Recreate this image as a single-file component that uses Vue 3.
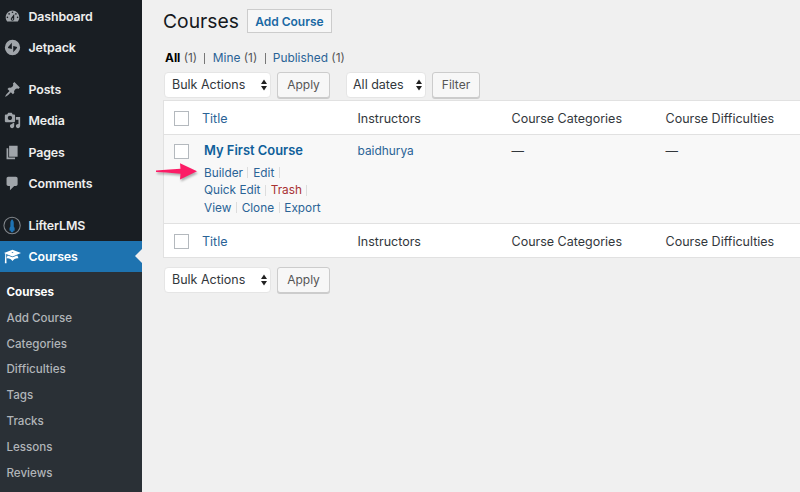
<template>
  <div class="admin">
    <!-- Sidebar -->
    <nav class="sidebar">
      <ul class="menu">
        <li
          v-for="item in menuItems"
          :key="item.label"
          class="menu-item"
          :class="{ spaced: item.spaced, current: item.current }"
        >
          <svg class="menu-icon" viewBox="0 0 20 20" aria-hidden="true">
            <template v-if="item.rocket">
              <circle cx="9.5" cy="10" r="9.6" fill="none" stroke="#82878c" stroke-width="1.2" />
              <path fill="#1e73b4" d="M9.5 2.6c1.3 1.3 2 2.6 2 4.2v4.4l1 1.6v3.4h-1.5V18h-3v-1.8H6.5v-3.4l1-1.6V6.800c0-1.600.7-2.900 2-4.200z" />
            </template>
            <path v-else fill="currentColor" fill-rule="evenodd" :d="item.icon" />
          </svg>
          <span>{{ item.label }}</span>
        </li>
      </ul>
      <ul class="submenu">
        <li v-for="(label, i) in submenu" :key="label" :class="{ active: i === 0 }">{{ label }}</li>
      </ul>
    </nav>

    <!-- Content -->
    <main class="content">
      <header class="heading">
        <h1>Courses</h1>
        <a class="add-btn">Add Course</a>
      </header>

      <div class="views">
        <b>All</b> (1)<i></i><a>Mine</a> (1)<i></i><a>Published</a> (1)
      </div>

      <div class="tablenav">
        <div class="select">
          Bulk Actions
          <svg width="6" height="12" viewBox="0 0 6 12"><path d="M3 .5 6 5H0zM3 11.5 0 7h6z" /></svg>
        </div>
        <button class="btn">Apply</button>
        <div class="select dates">
          All dates
          <svg width="6" height="12" viewBox="0 0 6 12"><path d="M3 .5 6 5H0zM3 11.5 0 7h6z" /></svg>
        </div>
        <button class="btn filter">Filter</button>
      </div>

      <div class="table">
        <div class="row head">
          <span class="check"></span>
          <a>Title</a>
          <span v-for="col in columns" :key="col">{{ col }}</span>
        </div>
        <div class="row course">
          <span class="check"></span>
          <div class="course-title">
            <strong>My First Course</strong>
            <div v-for="(line, i) in actions" :key="i" class="actions">
              <template v-for="action in line" :key="action">
                <a :class="{ trash: action === 'Trash' }">{{ action }}</a>
                <i v-if="action !== 'Export'"></i>
              </template>
            </div>
            <svg class="arrow" width="42" height="20" viewBox="0 0 42 20">
              <path fill="#fc1c66" d="M0 8.6 10 7.8 24.5 6.800 24 1.200 41 9.300 24 17.500 24.500 11.800 10 10.600 0 9.900z" />
            </svg>
          </div>
          <a class="author">baidhurya</a>
          <span>—</span>
          <span>—</span>
        </div>
        <div class="row foot">
          <span class="check"></span>
          <a>Title</a>
          <span v-for="col in columns" :key="col">{{ col }}</span>
        </div>
      </div>

      <div class="tablenav bottom">
        <div class="select">
          Bulk Actions
          <svg width="6" height="12" viewBox="0 0 6 12"><path d="M3 .5 6 5H0zM3 11.5 0 7h6z" /></svg>
        </div>
        <button class="btn">Apply</button>
      </div>
    </main>
  </div>
</template>

<script setup>
const menuItems = [
  {
    label: 'Dashboard',
    icon: 'M3.76 16h12.48c1.1-1.37 1.76-3.11 1.76-5 0-4.42-3.58-8-8-8s-8 3.58-8 8c0 1.89.66 3.63 1.76 5zM10 4c.55 0 1 .45 1 1s-.45 1-1 1-1-.45-1-1 .45-1 1-1zM6 6c.55 0 1 .45 1 1s-.45 1-1 1-1-.45-1-1 .45-1 1-1zm8 0c.55 0 1 .45 1 1s-.45 1-1 1-1-.45-1-1 .45-1 1-1zm-5.37 5.55L12 7v6c0 1.1-.9 2-2 2s-2-.9-2-2c0-.57.24-1.08.63-1.45zM4 10c.55 0 1 .45 1 1s-.45 1-1 1-1-.45-1-1 .45-1 1-1zm12 0c.55 0 1 .45 1 1s-.45 1-1 1-1-.45-1-1 .45-1 1-1zm-5 3c0-.55-.45-1-1-1s-1 .45-1 1 .45 1 1 1 1-.45 1-1z'
  },
  {
    label: 'Jetpack',
    icon: 'M10 1a9 9 0 1 0 0 18 9 9 0 0 0 0-18zM9.2 4.5v7.3l-3.6-.9c-1-.25-1.1-.9-.7-1.6zM10.9 15.5V8.2l3.6.9c1 .25 1.1.9.7 1.6z'
  },
  {
    label: 'Posts',
    spaced: true,
    icon: 'M10.44 3.02l1.82-1.82 6.36 6.35-1.83 1.82c-1.05-.68-2.48-.57-3.41.36l-.75.75c-.92.93-1.04 2.35-.35 3.41l-1.83 1.82-2.41-2.41-2.8 2.79c-.42.42-3.38 2.71-3.8 2.29s1.86-3.39 2.28-3.81l2.79-2.79L4.1 9.36l1.83-1.82c1.05.69 2.48.57 3.4-.36l.75-.75c.93-.92 1.05-2.35.36-3.41z'
  },
  {
    label: 'Media',
    icon: 'M13 11V4c0-.55-.45-1-1-1h-1.67L9 1H5L3.67 3H2c-.55 0-1 .45-1 1v7c0 .55.45 1 1 1h10c.55 0 1-.45 1-1zM7 4.5c1.38 0 2.5 1.12 2.5 2.5S8.38 9.5 7 9.5 4.5 8.38 4.5 7 5.62 4.5 7 4.5zM14 6h5v10.5c0 1.38-1.12 2.5-2.5 2.5S14 17.88 14 16.5s1.12-2.5 2.5-2.5c.17 0 .34.02.5.05V9h-3V6zm-4 8.05V13h2v3.5c0 1.38-1.12 2.5-2.5 2.5S7 17.88 7 16.5 8.12 14 9.5 14c.17 0 .34.02.5.05z'
  },
  {
    label: 'Pages',
    icon: 'M6 15V2h10v13H6zm-1 1h8v2H3V5h2v11z'
  },
  {
    label: 'Comments',
    icon: 'M5 2h9c1.1 0 2 .9 2 2v7c0 1.1-.9 2-2 2h-2l-5 5v-5H5c-1.1 0-2-.9-2-2V4c0-1.1.9-2 2-2z'
  },
  { label: 'LifterLMS', spaced: true, rocket: true },
  {
    label: 'Courses',
    current: true,
    icon: 'M10 10L2.54 7.02 3 18H1l.48-11.41L0 6l10-4 10 4zm0-5c-.55 0-1 .22-1 .5s.45.5 1 .5 1-.22 1-.5-.45-.5-1-.5zm0 6l5.57-2.23c.71.94 1.2 2.07 1.36 3.3-.3-.04-.61-.07-.93-.07-2.55 0-4.78 1.37-6 3.41C8.78 13.37 6.55 12 4 12c-.32 0-.63.03-.93.07.16-1.23.65-2.36 1.36-3.3z'
  }
]

const submenu = ['Courses', 'Add Course', 'Categories', 'Difficulties', 'Tags', 'Tracks', 'Lessons', 'Reviews']

const columns = ['Instructors', 'Course Categories', 'Course Difficulties']

const actions = [
  ['Builder', 'Edit'],
  ['Quick Edit', 'Trash'],
  ['View', 'Clone', 'Export']
]
</script>

<style>
body {
  margin: 0;
  overflow: hidden;
}
</style>

<style scoped>
.admin {
  display: flex;
  width: 800px;
  height: 492px;
  overflow: hidden;
  background: #f0f0f0;
  font-family: Inter, "Liberation Sans", sans-serif;
  font-size: 12.5px;
  color: #32373c;
}

ul {
  list-style: none;
  margin: 0;
  padding: 0;
}

a { color: #2a6396; }
i { font-style: normal; }

/* ── Sidebar ───────────────────────────────── */
.sidebar {
  box-sizing: border-box;
  display: flex;
  flex-direction: column;
  width: 142px;
  flex-shrink: 0;
  background: #191e23;
}

.menu { padding-top: 1px; }

.menu-item {
  position: relative;
  display: flex;
  align-items: center;
  gap: 8px;
  height: 31.3px;
  padding-left: 3.5px;
  color: #eee;
  font-weight: 600;
  font-size: 12.4px;
  letter-spacing: -0.13px;
}
.menu-item.spaced { margin-top: 10.3px; }

.menu-icon {
  width: 17px;
  height: 17px;
  color: #a0a5aa;
  overflow: visible;
}

.menu-item.current {
  background: #1e73b0;
  color: #fff;
}
.menu-item.current .menu-icon { color: #fff; }
.menu-item.current::after {
  content: '';
  position: absolute;
  right: 0;
  top: 8.5px;
  border: 7px solid transparent;
  border-left-width: 0;
  border-right-color: #f0f0f0;
}

.submenu {
  flex: 1;
  padding: 8px 0 0 6.5px;
  background: #2a3036;
  color: #b1b5b9;
  font-size: 11.6px;
  font-weight: 500;
}
.submenu li { line-height: 25.8px; }
.submenu .active {
  color: #fff;
  font-weight: 700;
}

/* ── Heading ───────────────────────────────── */
.content {
  flex: 1;
  min-width: 0;
  padding: 8px 0 0 21px;
}

.heading {
  display: flex;
  align-items: center;
  gap: 8px;
  height: 26px;
}
h1 {
  margin: 0;
  font-size: 19.3px;
  font-weight: 400;
  color: #15191d;
}
.add-btn {
  box-sizing: border-box;
  width: 85px;
  height: 24px;
  border: 1px solid #ccc;
  background: #f7f7f7;
  line-height: 23px;
  text-align: center;
  font-size: 12px;
  font-weight: 600;
  color: #1a69a4;
}

.views {
  padding-left: 2px;
  margin-top: 15px;
  height: 17px;
  line-height: 17px;
  font-size: 11.9px;
  color: #555;
}
.views b { color: #000; }
.views i {
  display: inline-block;
  width: 1px;
  height: 11px;
  margin: 0 7.3px;
  vertical-align: -1.5px;
  background: #777;
}

/* ── Filters ───────────────────────────────── */
.tablenav {
  display: flex;
  align-items: center;
  gap: 6px;
  height: 27px;
  margin-top: 5px;
  padding-left: 1px;
}
.select {
  box-sizing: border-box;
  display: flex;
  align-items: center;
  justify-content: space-between;
  width: 107px;
  height: 26px;
  padding: 0 3px 0 7px;
  border: 1px solid #e5e5e5;
  border-radius: 4px;
  background: #fff;
  fill: #222;
}
.select.dates {
  width: 80px;
  margin-left: 10px;
  padding-left: 6px;
}
.btn {
  box-sizing: border-box;
  width: 53px;
  height: 26px;
  padding: 0;
  border: 1px solid #ccc;
  border-radius: 3px;
  background: #f7f7f7;
  box-shadow: 0 1px 0 #ccc;
  font: inherit;
  font-size: 12px;
  color: #555;
}
.btn.filter { width: 48px; }

/* ── Table ─────────────────────────────────── */
.table {
  margin-top: 2px;
  border: 1px solid #e1e1e1;
  border-right: 0;
  background: #fff;
}
.row {
  display: grid;
  grid-template-columns: 38px 155.5px 154px 154px 1fr;
  white-space: nowrap;
}
.head,
.foot {
  box-sizing: border-box;
  height: 33px;
  padding-top: 1px;
  align-items: center;
}
.check {
  box-sizing: border-box;
  width: 15px;
  height: 15px;
  margin-left: 10px;
  border: 1px solid #b4b9be;
  background: #fff;
}
.course {
  height: 90px;
  padding-top: 6px;
  box-sizing: border-box;
  border: solid #e1e1e1;
  border-width: 1px 0;
  background: #f8f8f8;
  line-height: 20px;
}
.course .check { margin-top: 3px; }
.course-title {
  position: relative;
  padding-left: 2px;
}
.course-title strong {
  display: block;
  height: 23px;
  font-size: 12.9px;
  font-weight: 600;
  color: #0f5f9a;
}
.author { font-size: 11.9px; }
.actions {
  display: flex;
  align-items: center;
  height: 17.6px;
  font-size: 11.8px;
}
.actions i {
  width: 1px;
  height: 11px;
  margin: 0 4.8px 0 4.5px;
  background: #ddd;
}
.actions .trash { color: #a83232; }

/* Pointer laid over the table edge */
.arrow {
  position: absolute;
  left: -46px;
  top: 21px;
  filter: drop-shadow(1px 2px 1px rgba(0, 0, 0, 0.3));
}

.bottom { margin-top: 8px; }
</style>
